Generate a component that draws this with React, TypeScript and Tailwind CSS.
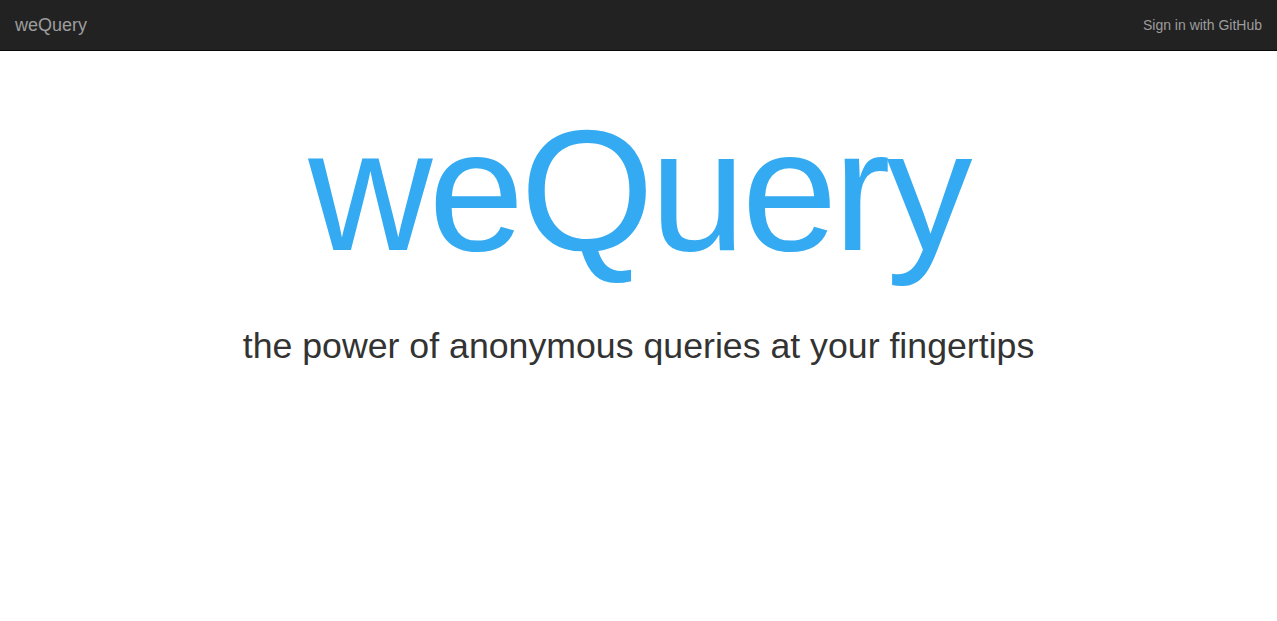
export default function App() {
  return (
    <div className="min-h-[621px] bg-white" style={{ fontFamily: '"Liberation Sans", Arial, sans-serif' }}>
      <div className="h-[51px] bg-[#222222] border-b border-[#080808] flex items-center justify-between px-[15px]">
        <span className="text-[18px] text-[#9d9d9d] leading-[20px]">weQuery</span>
        <span className="text-[14px] text-[#9d9d9d] leading-[20px]">Sign in with GitHub</span>
      </div>
      <div className="flex flex-col items-center">
        <h1 className="text-[172px] leading-[172px] text-[#34aaf2] mt-[53px] tracking-[-4px]">weQuery</h1>
        <p className="text-[35.7px] leading-[40px] text-[#333333] mt-[50px]">the power of anonymous queries at your fingertips</p>
      </div>
    </div>
  );
}
